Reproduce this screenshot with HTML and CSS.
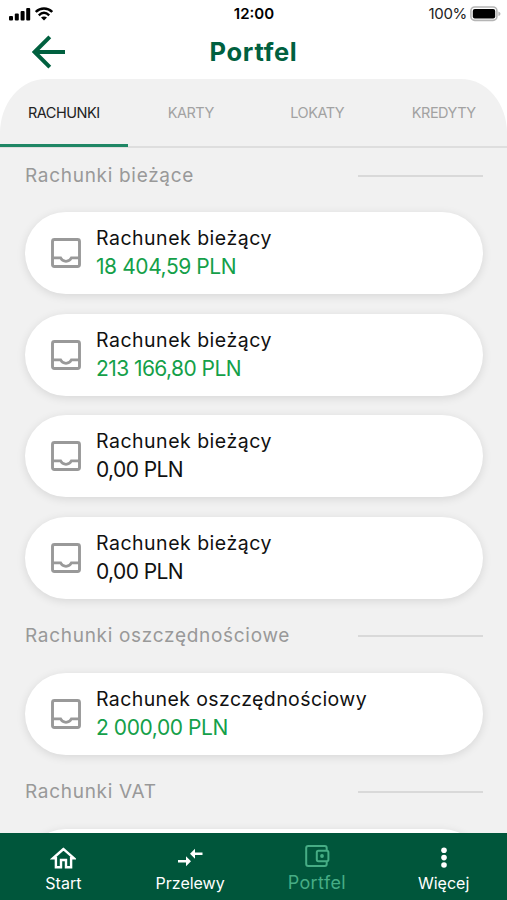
FILE: index.html
```html
<!DOCTYPE html>
<html lang="pl">
<head>
<meta charset="utf-8">
<meta name="viewport" content="width=device-width, initial-scale=1">
<title>Portfel</title>
<link rel="stylesheet" href="styles.css">
</head>
<body>
<svg class="defs" width="0" height="0">
  <symbol id="inbox" viewBox="0 0 30 30">
    <rect x="1.5" y="1.5" width="27" height="27" rx="2" fill="none" stroke="currentColor" stroke-width="2.9"/>
    <path d="M1.5 19.8H9.6C10.6 22 12.5 23.3 15 23.3S19.4 22 20.4 19.8H28.5" fill="none" stroke="currentColor" stroke-width="2.7"/>
  </symbol>
</svg>
<div class="app">
  <div class="status">
    <div class="signals">
      <svg width="22" height="14" viewBox="0 0 22 14"><rect x="0" y="9" width="4" height="4.5" rx="1"/><rect x="5.8" y="6.5" width="4" height="7" rx="1"/><rect x="11.6" y="4" width="4" height="9.5" rx="1"/><rect x="17.2" y="1" width="4" height="12.5" rx="1"/></svg>
      <svg width="18" height="14" viewBox="0 0 18 14"><path d="M.8 5C5.5.4 12.5.4 17.2 5M3.8 8.3C7 5.3 11 5.3 14.2 8.3" fill="none" stroke="#000" stroke-width="2.4"/><path d="M9 13.5 6 10.6C7.6 9.1 10.4 9.1 12 10.6Z"/></svg>
    </div>
    <div class="clock">12:00</div>
    <div class="battery"><span>100%</span>
      <svg width="31" height="16" viewBox="0 0 31 16"><rect x=".9" y="1" width="26" height="13.4" rx="3.8" fill="#fff" stroke="#b5b5b5" stroke-width="1.6"/><rect x="2.8" y="2.9" width="22.4" height="9.6" rx="2"/><path d="M28.4 5.4Q30.5 6 30.5 7.7T28.4 10Z" fill="#b5b5b5"/></svg>
    </div>
  </div>
  <header class="topbar">
    <svg class="back" width="34" height="34" viewBox="0 0 34 34"><path d="M33 17H3M17.8 1.8 2.6 17 17.8 32.2" fill="none" stroke="currentColor" stroke-width="4"/></svg>
    <h1>Portfel</h1>
  </header>
  <main class="sheet">
    <nav class="tabs">
      <span class="tab active">RACHUNKI</span><span class="tab">KARTY</span><span class="tab">LOKATY</span><span class="tab">KREDYTY</span>
    </nav>
    <div class="list">
      <h2 class="section">Rachunki bieżące</h2>
      <div class="cards">
        <article class="card"><svg class="icon"><use href="#inbox"/></svg><div class="info"><p class="name">Rachunek bieżący</p><p class="sum plus">18 404,59 PLN</p></div></article>
        <article class="card"><svg class="icon"><use href="#inbox"/></svg><div class="info"><p class="name">Rachunek bieżący</p><p class="sum plus wide">213 166,80 PLN</p></div></article>
        <article class="card"><svg class="icon"><use href="#inbox"/></svg><div class="info"><p class="name">Rachunek bieżący</p><p class="sum zero">0,00 PLN</p></div></article>
        <article class="card"><svg class="icon"><use href="#inbox"/></svg><div class="info"><p class="name">Rachunek bieżący</p><p class="sum zero">0,00 PLN</p></div></article>
      </div>
      <h2 class="section">Rachunki oszczędnościowe</h2>
      <div class="cards">
        <article class="card"><svg class="icon"><use href="#inbox"/></svg><div class="info"><p class="name long">Rachunek oszczędnościowy</p><p class="sum plus">2 000,00 PLN</p></div></article>
      </div>
      <h2 class="section">Rachunki VAT</h2>
      <div class="cards"><article class="card"></article></div>
    </div>
  </main>
  <footer class="bottom">
    <a class="item"><svg width="26" height="24" viewBox="0 0 26 24"><path d="M13.5 3 3 12.3H5.9V21.2H11V14H16V21.2H21.1V12.3H24Z" fill="none" stroke="currentColor" stroke-width="2.4"/></svg><span>Start</span></a>
    <a class="item"><svg width="26" height="24" viewBox="0 0 26 24"><path d="M13 7.8 18 2.8V6.5H25.5V9.1H18V12.8ZM14 15.3 9 10.3V14H1V16.6H9V20.3Z" fill="currentColor"/></svg><span>Przelewy</span></a>
    <a class="item current"><svg width="26" height="24" viewBox="0 0 26 24"><path d="M22.7 6.6V4Q22.7 2 20.7 2H4.2Q2.2 2 2.2 4V20Q2.2 22 4.2 22H20.7Q22.7 22 22.7 20V17.3" fill="none" stroke="currentColor" stroke-width="2"/><rect x="12.8" y="6.8" width="11.6" height="10.4" rx="1.6" fill="none" stroke="currentColor" stroke-width="2"/><circle cx="18" cy="12" r="1.9" fill="currentColor"/></svg><span class="wallet">Portfel</span></a>
    <a class="item"><svg width="26" height="24" viewBox="0 0 26 24"><g fill="currentColor"><circle cx="13" cy="4.2" r="2.8"/><circle cx="13" cy="11.6" r="2.8"/><circle cx="13" cy="19" r="2.8"/></g></svg><span>Więcej</span></a>
  </footer>
</div>
</body>
</html>
```
FILE: styles.css
```css
* { box-sizing: border-box; }
body { margin: 0; background: #fff; font-family: Inter, sans-serif; }
h1, h2, p { margin: 0; font-weight: 400; }
.defs { display: block; }
.app { width: 507px; height: 900px; display: flex; flex-direction: column; overflow: hidden; }

.status { flex: none; height: 27px; display: grid; grid-template-columns: 1fr auto 1fr; align-items: center; padding: 0 6px 0 9px; }
.signals { display: flex; gap: 4px; }
.clock { font-size: 15px; font-weight: 600; line-height: 27px; margin-right: 2px; }
.battery { display: flex; align-items: center; justify-content: flex-end; gap: 3px; font-size: 15px; line-height: 27px; letter-spacing: -0.3px; color: #222; }

.topbar { flex: none; height: 52px; display: grid; grid-template-columns: 34px 1fr 34px; align-items: center; padding: 0 32px; color: #00603f; }
.back { display: block; margin-top: -3px; }
.topbar h1 { text-align: center; font-size: 25.5px; font-weight: 700; line-height: 50px; margin-top: -2px; letter-spacing: 0.7px; }

.sheet { flex: 1; min-height: 0; background: #f1f1f1; border-radius: 46px 46px 0 0 / 54px 54px 0 0; overflow: hidden; }
.tabs { height: 69px; display: grid; grid-template-columns: 127.5px 1fr 1fr 1fr; border-bottom: 2px solid #dedede; }
.tab { text-align: center; font-size: 14.5px; line-height: 67px; letter-spacing: -0.5px; color: #a2a2a2; }
.tab.active { color: #222; height: 68px; border-bottom: 3px solid #1f8765; }

.list { padding: 0 24.5px 0 25px; }
.section { height: 55px; margin: 9.5px 0; display: flex; align-items: center; justify-content: space-between; font-size: 19px; letter-spacing: 0.7px; color: #999; line-height: 26px; white-space: nowrap; }
.section:first-child { margin: 0 0 9.2px; }
.section::after { content: ""; width: 125px; height: 2px; background: #d9d9d9; }
.cards { display: grid; gap: 19.5px; }
.card { height: 82px; border-radius: 41px; background: #fff; box-shadow: 0 2px 10px rgba(0, 0, 0, 0.11); display: flex; align-items: center; gap: 15px; padding-left: 26px; color: #111; white-space: nowrap; }
.icon { width: 30px; height: 30px; flex: none; color: #999; }
.info { padding-top: 2px; }
.name { font-size: 19.5px; line-height: 26px; letter-spacing: 0.5px; }
.name.long { letter-spacing: 0.4px; }
.sum { font-size: 21px; line-height: 32px; letter-spacing: -0.42px; }
.sum.wide { letter-spacing: -0.57px; }
.sum.zero { letter-spacing: -0.6px; }
.plus { color: #14a049; }

.bottom { flex: none; height: 67px; display: grid; grid-template-columns: repeat(4, 1fr); background: #00563b; color: #fff; }
.item { display: flex; flex-direction: column; align-items: center; padding-top: 13px; font-size: 16px; }
.item svg { flex: none; }
.item span { line-height: 26px; }
.current { padding-top: 11px; color: #46ad85; }
.item .wallet { font-size: 18px; letter-spacing: 0.4px; margin-top: 2px; }
```
